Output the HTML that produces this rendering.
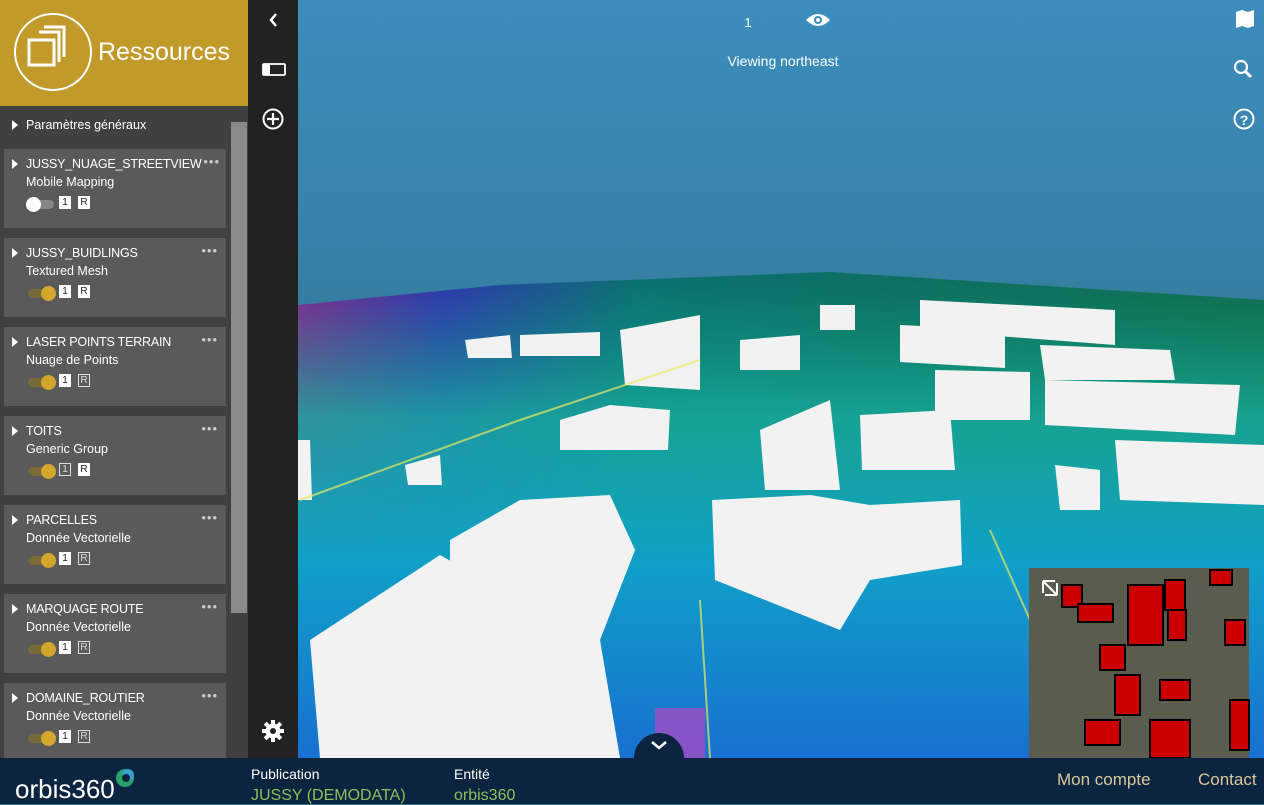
<!DOCTYPE html>
<html><head><meta charset="utf-8"><style>
*{margin:0;padding:0;box-sizing:border-box}
body{width:1264px;height:804px;overflow:hidden;font-family:"Liberation Sans",sans-serif;background:#2c6f8a;position:relative}
.abs{position:absolute}
#hdr{left:0;top:0;width:248px;height:106px;background:#c29a2a}
#list{left:0;top:106px;width:248px;height:652px;background:#404040}
#tb{left:248px;top:0;width:50px;height:758px;background:#222}
.card{position:absolute;left:4px;width:222px;height:79px;background:#5a5a5a;color:#fff}
.card .t{position:absolute;left:22px;top:8px;font-size:12.5px;letter-spacing:-0.2px}
.card .s{position:absolute;left:22px;top:26px;font-size:12.5px}
.card .tri{position:absolute;left:8px;top:10px;width:0;height:0;border-left:6px solid #fff;border-top:5px solid transparent;border-bottom:5px solid transparent}
.card .dots{position:absolute;right:8px;top:5px;font-size:13px;letter-spacing:1px;color:#ccc}
.tg{position:absolute;left:24px;top:51px;width:26px;height:9px;border-radius:5px;background:#7a6a3a}
.tg i{position:absolute;right:-2px;top:-3px;width:15px;height:15px;border-radius:50%;background:#d4a72c}
.tg.off{background:#888}.tg.off i{left:-2px;right:auto;background:#fff}
.b{position:absolute;top:47px;width:12px;height:13px;background:#fff;color:#222;font-size:10px;text-align:center;line-height:13px}
.b.o{background:transparent;border:1px solid #ddd;color:#ddd;line-height:11px}
#foot{left:0;top:758px;width:1264px;height:46px;background:#0b2541}
</style></head><body>
<svg class="abs" style="left:298px;top:0" width="966" height="758" viewBox="298 0 966 758">
<defs>
<linearGradient id="sky" x1="0" y1="0" x2="0" y2="1"><stop offset="0" stop-color="#3c8dbd"/><stop offset="1" stop-color="#2a6878"/></linearGradient>
<linearGradient id="g1" x1="0" y1="0" x2="1" y2="0"><stop offset="0" stop-color="#8a2090"/><stop offset=".15" stop-color="#3030b0"/><stop offset=".35" stop-color="#0a7070"/><stop offset="1" stop-color="#0f6a4a"/></linearGradient>
<linearGradient id="g2" x1="0" y1="0" x2="0" y2="1"><stop offset="0" stop-color="#10a080" stop-opacity="0"/><stop offset=".3" stop-color="#18b0a0" stop-opacity=".8"/><stop offset=".6" stop-color="#10a0c8"/><stop offset="1" stop-color="#1870d0"/></linearGradient>
</defs>
<rect x="298" y="0" width="966" height="758" fill="url(#sky)"/>
<polygon points="298,305 500,285 830,272 1264,300 1264,758 298,758" fill="url(#g1)"/>
<polygon points="298,305 500,285 830,272 1264,300 1264,758 298,758" fill="url(#g2)"/>
<g fill="#f2f2f2">
<polygon points="310,640 440,555 520,600 600,640 620,758 320,758"/>
<polygon points="450,540 520,500 610,495 635,550 600,640 450,600"/>
<polygon points="712,500 810,495 870,505 960,500 962,565 870,580 840,630 715,580"/>
<polygon points="760,430 830,400 840,490 765,490"/>
<polygon points="860,415 950,410 955,470 862,470"/>
<polygon points="560,420 610,405 670,410 668,450 560,450"/>
<polygon points="935,370 1030,372 1030,420 935,420"/>
<polygon points="1045,380 1240,385 1235,435 1045,425"/>
<polygon points="1115,440 1264,445 1264,505 1120,500"/>
<polygon points="900,325 1005,330 1005,368 900,362"/>
<polygon points="920,300 1115,310 1115,345 920,330"/>
<polygon points="1040,345 1170,350 1175,380 1045,380"/>
<polygon points="620,330 700,315 700,390 625,385"/>
<polygon points="740,340 800,335 800,370 740,370"/>
<polygon points="465,340 510,335 512,358 468,358"/>
<polygon points="520,335 600,332 600,356 520,356"/>
<polygon points="405,465 440,455 442,485 408,485"/>
<polygon points="1055,465 1100,470 1100,510 1060,510"/>
<polygon points="820,305 855,305 855,330 820,330"/>
<polygon points="298,440 310,440 312,500 298,500"/>
</g>
<g stroke="#e8e860" stroke-width="2" fill="none" opacity=".7">
<path d="M300,500 L520,420 L700,360"/><path d="M990,530 L1030,620"/><path d="M700,600 L710,758"/>
</g>
<rect x="655" y="708" width="50" height="50" fill="#d040c0" opacity=".6"/>
<rect x="1029" y="568" width="220" height="190" fill="#5a5d4e"/>
<g fill="#c00" stroke="#000" stroke-width="2">
<rect x="1062" y="585" width="20" height="22"/><rect x="1078" y="604" width="35" height="18"/>
<rect x="1128" y="585" width="35" height="60"/><rect x="1165" y="580" width="20" height="30"/>
<rect x="1168" y="610" width="18" height="30"/><rect x="1100" y="645" width="25" height="25"/>
<rect x="1115" y="675" width="25" height="40"/><rect x="1160" y="680" width="30" height="20"/>
<rect x="1150" y="720" width="40" height="38"/><rect x="1085" y="720" width="35" height="25"/>
<rect x="1230" y="700" width="19" height="50"/><rect x="1210" y="570" width="22" height="15"/>
<rect x="1225" y="620" width="20" height="25"/>
</g>
<path d="M1043,581 h12 M1043,581 v12 M1057,595 h-12 M1057,595 v-12 M1044,582 L1056,594" stroke="#fff" stroke-width="2" fill="none"/>
<path d="M634,758 a25,25 0 0 1 50,0 z" fill="#0d2440"/>
<path d="M652,742 l7,6 l7,-6" stroke="#fff" stroke-width="2.5" fill="none"/>
<text x="748" y="27" fill="#fff" font-size="13" text-anchor="middle" font-family="Liberation Sans">1</text>
<path d="M806,20 q12,-12 24,0 q-12,12 -24,0z" fill="#fff"/><circle cx="818" cy="20" r="4" fill="#3b8ab6"/><circle cx="818" cy="20" r="2" fill="#fff"/>
<text x="783" y="66" fill="#fff" font-size="14" text-anchor="middle" font-family="Liberation Sans">Viewing northeast</text>
<path d="M1236,12 l6,-2 l6,2 l6,-2 v16 l-6,2 l-6,-2 l-6,2z" fill="#fff"/>
<circle cx="1241" cy="67" r="6" stroke="#fff" stroke-width="2.2" fill="none"/><path d="M1245,71 l6,6" stroke="#fff" stroke-width="3"/>
<circle cx="1244" cy="119" r="9.5" stroke="#fff" stroke-width="2" fill="none"/>
<text x="1244" y="125" fill="#fff" font-size="14" font-weight="bold" text-anchor="middle" font-family="Liberation Sans">?</text>
</svg>

<div id="hdr" class="abs">
<svg class="abs" style="left:13px;top:12px" width="80" height="80"><circle cx="40" cy="40" r="38" stroke="#fff" stroke-width="2" fill="none"/>
<path d="M31,15 h20 v30 M26,20 h20 v30" stroke="#fff" stroke-width="3" fill="none"/><rect x="16" y="28" width="25" height="25" stroke="#fff" stroke-width="3" fill="none"/></svg>
<div class="abs" style="left:98px;top:38px;font-size:25px;color:#fff">Ressources</div>
</div>
<div id="list" class="abs">
<div class="abs" style="left:231px;top:16px;width:16px;height:491px;background:#8a8a8a"></div>
<div class="abs" style="left:12px;top:14px;border-left:6px solid #fff;border-top:5px solid transparent;border-bottom:5px solid transparent"></div>
<div class="abs" style="left:26px;top:12px;font-size:12.5px;color:#fff">Paramètres généraux</div>
</div>
<div class="card" style="top:149px"><div class="tri"></div><div class="t" style="letter-spacing:-0.2px">JUSSY_NUAGE_STREETVIEW</div><div class="dots" style="right:6px">•••</div><div class="s">Mobile Mapping</div><div class="tg off"><i></i></div><div class="b" style="left:55px">1</div><div class="b" style="left:74px">R</div></div>
<div class="card" style="top:238px"><div class="tri"></div><div class="t">JUSSY_BUIDLINGS</div><div class="dots">•••</div><div class="s">Textured Mesh</div><div class="tg"><i></i></div><div class="b" style="left:55px">1</div><div class="b" style="left:74px">R</div></div>
<div class="card" style="top:327px"><div class="tri"></div><div class="t">LASER POINTS TERRAIN</div><div class="dots">•••</div><div class="s">Nuage de Points</div><div class="tg"><i></i></div><div class="b" style="left:55px">1</div><div class="b o" style="left:74px">R</div></div>
<div class="card" style="top:416px"><div class="tri"></div><div class="t">TOITS</div><div class="dots">•••</div><div class="s">Generic Group</div><div class="tg"><i></i></div><div class="b o" style="left:55px">1</div><div class="b" style="left:74px">R</div></div>
<div class="card" style="top:505px"><div class="tri"></div><div class="t">PARCELLES</div><div class="dots">•••</div><div class="s">Donnée Vectorielle</div><div class="tg"><i></i></div><div class="b" style="left:55px">1</div><div class="b o" style="left:74px">R</div></div>
<div class="card" style="top:594px"><div class="tri"></div><div class="t">MARQUAGE ROUTE</div><div class="dots">•••</div><div class="s">Donnée Vectorielle</div><div class="tg"><i></i></div><div class="b" style="left:55px">1</div><div class="b o" style="left:74px">R</div></div>
<div class="card" style="top:683px;height:75px"><div class="tri"></div><div class="t">DOMAINE_ROUTIER</div><div class="dots">•••</div><div class="s">Donnée Vectorielle</div><div class="tg"><i></i></div><div class="b" style="left:55px">1</div><div class="b o" style="left:74px">R</div></div>

<div id="tb" class="abs">
<svg width="50" height="758"><path d="M28,14 l-5,6 l5,6" stroke="#fff" stroke-width="2.5" fill="none"/>
<rect x="15" y="64" width="22" height="11" rx="1" stroke="#fff" stroke-width="1.8" fill="none"/><rect x="15" y="64" width="7" height="11" fill="#fff"/>
<circle cx="25" cy="119" r="9.5" stroke="#fff" stroke-width="2" fill="none"/><path d="M25,113 v12 M19,119 h12" stroke="#fff" stroke-width="2.2"/>
<g fill="#fff"><circle cx="25" cy="731" r="7.5"/>
<rect x="23" y="720" width="4" height="22"/><rect x="14" y="729" width="22" height="4"/>
<rect x="23" y="720" width="4" height="22" transform="rotate(45 25 731)"/><rect x="23" y="720" width="4" height="22" transform="rotate(-45 25 731)"/></g>
<circle cx="25" cy="731" r="3" fill="#222"/></svg>
</div>

<div id="foot" class="abs">
<div class="abs" style="left:15px;top:16px;font-size:26px;color:#fff">orbis360</div>
<svg class="abs" style="left:114px;top:8px" width="24" height="24"><circle cx="11" cy="12" r="9" fill="#2aa06a"/><circle cx="14" cy="9" r="6" fill="#3aa0d0"/><circle cx="12" cy="12" r="4" fill="#0b2541"/></svg>
<div class="abs" style="left:251px;top:8px;font-size:14px;color:#fff">Publication</div>
<div class="abs" style="left:251px;top:29px;font-size:16px;color:#8fbf5a">JUSSY (DEMODATA)</div>
<div class="abs" style="left:454px;top:8px;font-size:14px;color:#fff">Entité</div>
<div class="abs" style="left:454px;top:29px;font-size:16px;color:#8fbf5a">orbis360</div>
<div class="abs" style="left:1057px;top:12px;font-size:17px;color:#d9c99a">Mon compte</div>
<div class="abs" style="left:1198px;top:12px;font-size:17px;color:#d9c99a">Contact</div>
</div>
</body></html>
